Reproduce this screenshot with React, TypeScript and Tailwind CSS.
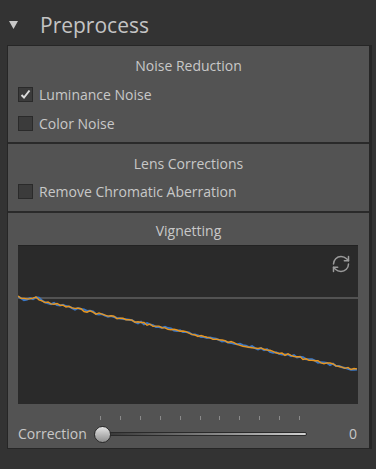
import React from "react";
import { RefreshCw } from "lucide-react";

function noisyLine(seed: number, amp: number) {
  let s = seed;
  const rand = () => {
    s = (s * 9301 + 49297) % 233280;
    return s / 233280;
  };
  const pts: string[] = [];
  for (let x = 0; x <= 339; x += 3) {
    let y = 50 + (x / 339) * 74;
    if (x < 30) y += Math.sin(x / 4) * 2;
    y += (rand() - 0.5) * amp;
    pts.push(`${x},${y.toFixed(1)}`);
  }
  return pts.join(" ");
}

function Checkbox({ checked, label }: { checked?: boolean; label: string }) {
  return (
    <div className="flex items-center gap-[6px] h-[29px]">
      <div className="w-[15px] h-[15px] border border-[#2a2a2a] bg-[#3b3b3b] flex items-center justify-center">
        {checked ? (
          <svg width="13" height="13" viewBox="0 0 13 13">
            <path d="M2.5 7 L5 9.5 L10.5 2.5" stroke="#dcdcdc" strokeWidth="2" fill="none" />
          </svg>
        ) : null}
      </div>
      <span>{label}</span>
    </div>
  );
}

export default function App() {
  const orange = noisyLine(7, 2.4);
  const blue = noisyLine(13, 2.4);
  const ticks = Array.from({ length: 11 }, (_, i) => i);

  return (
    <div
      className="w-[376px] h-[469px] bg-[#333333] text-[#c8c8c8] overflow-hidden"
      style={{ fontFamily: '"Open Sans", "Noto Sans", sans-serif' }}
    >
      <div className="h-[45px] flex items-center pl-[9px] pt-[6px]">
        <svg width="9" height="8" viewBox="0 0 9 8" className="mt-[-1px]">
          <path d="M0 0 L9 0 L4.5 8 Z" fill="#c8c8c8" />
        </svg>
        <span className="ml-[22px] text-[21px] leading-none text-[#c4c4c4]">Preprocess</span>
      </div>

      <div className="ml-[7px] w-[365px] border border-[#262626] border-r-[3px] text-[14px]">
        <div className="bg-[#535353] pt-[7px] pb-[4px] px-[10px]">
          <div className="text-center h-[26px] leading-[26px] mb-[1px]">Noise Reduction</div>
          <Checkbox checked label="Luminance Noise" />
          <Checkbox label="Color Noise" />
        </div>
        <div className="h-[2px] bg-[#2a2a2a]" />
        <div className="bg-[#535353] pt-[7px] pb-[5px] px-[10px]">
          <div className="text-center h-[26px] leading-[26px]">Lens Corrections</div>
          <Checkbox label="Remove Chromatic Aberration" />
        </div>
        <div className="h-[2px] bg-[#2a2a2a]" />
        <div className="bg-[#535353] pt-[5px] pb-[4px] px-[10px]">
          <div className="text-center h-[26px] leading-[26px] mb-[1px]">Vignetting</div>
          <div className="relative w-[340px] h-[159px] bg-[#2a2a2a] border-t border-[#222]">
            <RefreshCw
              className="absolute right-[7px] top-[8px] text-[#9a9a9a]"
              size={20}
              strokeWidth={1.8}
            />
            <svg width="340" height="159" className="absolute left-0 top-0">
              <line x1="0" y1="52" x2="340" y2="52" stroke="#7a7a7a" strokeWidth="1" />
              <polyline points={blue} fill="none" stroke="#3a78c8" strokeWidth="2" />
              <polyline points={orange} fill="none" stroke="#e8951e" strokeWidth="1.4" />
            </svg>
          </div>
          <div className="relative h-[40px]">
            {ticks.map((i) => (
              <div
                key={i}
                className="absolute top-[12px] w-px h-[4px] bg-[#8a8a8a]"
                style={{ left: 82 + i * 19.9 }}
              />
            ))}
            <div className="absolute left-0 top-[19px] flex items-center w-full">
              <span className="w-[70px]">Correction</span>
              <div className="relative ml-[7px] w-[212px] h-[4px] rounded-full border border-[#2a2a2a] bg-gradient-to-r from-[#303030] to-[#d0d0d0]">
                <div className="absolute left-[-2px] top-[-7px] w-[17px] h-[17px] rounded-full border border-[#2a2a2a] bg-gradient-to-b from-[#e4e4e4] to-[#8e8e8e]" />
              </div>
              <span className="ml-auto mr-[2px]">0</span>
            </div>
          </div>
        </div>
      </div>
    </div>
  );
}
